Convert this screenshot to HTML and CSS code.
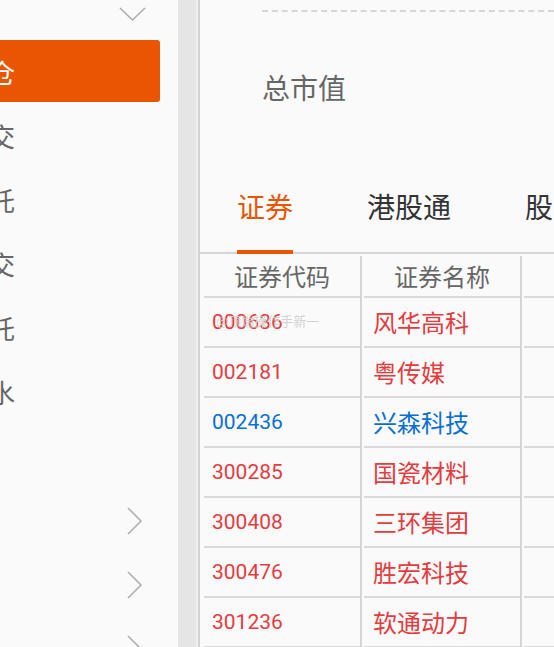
FILE: index.html
```html
<!DOCTYPE HTML>
<html>
<head>
 <title>持仓</title>
 <meta name="viewport" content="width=device-width, initial-scale=1">
 <link rel="stylesheet" href="styles.css">
</head>

<body>
<div class="page">

 <div class="sidebar">
  <div class="menu-head">
   <svg class="chev-down" width="28" height="15" viewBox="0 0 28 15"><polyline points="1,1 13.5,13 26,1" /></svg>
  </div>
  <div class="menu-item active"><div class="menu-label"><span>持仓</span></div></div>
  <div class="menu-item"><div class="menu-label"><span>成交</span></div></div>
  <div class="menu-item"><div class="menu-label"><span>委托</span></div></div>
  <div class="menu-item"><div class="menu-label"><span>历史成交</span></div></div>
  <div class="menu-item"><div class="menu-label"><span>历史委托</span></div></div>
  <div class="menu-item"><div class="menu-label"><span>资金流水</span></div></div>
  <div class="menu-item"></div>
  <div class="menu-item more"><svg class="chev-right" width="16" height="28" viewBox="0 0 16 28"><polyline points="1,1 14,14 1,27" /></svg></div>
  <div class="menu-item more"><svg class="chev-right" width="16" height="28" viewBox="0 0 16 28"><polyline points="1,1 14,14 1,27" /></svg></div>
  <div class="menu-item more"><svg class="chev-right" width="16" height="28" viewBox="0 0 16 28"><polyline points="1,1 14,14 1,27" /></svg></div>
 </div>

 <div class="divider"></div>

 <div class="main">
  <div class="summary">
   <p class="summary-title">总市值</p>
  </div>

  <div class="tabs">
   <div class="tab active">证券</div>
   <div class="tab">港股通</div>
   <div class="tab">股票期权</div>
  </div>

  <div class="grid">
   <div class="row head">
    <div class="cell"><div class="cell-in">证券代码</div></div>
    <div class="cell"><div class="cell-in">证券名称</div></div>
    <div class="cell"><div class="cell-in">持仓数量</div></div>
   </div>
   <div class="row up">
    <div class="cell"><div class="cell-in code">000636</div></div>
    <div class="cell"><div class="cell-in name">风华高科</div></div>
    <div class="cell"><div class="cell-in"></div></div>
   </div>
   <div class="row up">
    <div class="cell"><div class="cell-in code">002181</div></div>
    <div class="cell"><div class="cell-in name">粤传媒</div></div>
    <div class="cell"><div class="cell-in"></div></div>
   </div>
   <div class="row down">
    <div class="cell"><div class="cell-in code">002436</div></div>
    <div class="cell"><div class="cell-in name">兴森科技</div></div>
    <div class="cell"><div class="cell-in"></div></div>
   </div>
   <div class="row up">
    <div class="cell"><div class="cell-in code">300285</div></div>
    <div class="cell"><div class="cell-in name">国瓷材料</div></div>
    <div class="cell"><div class="cell-in"></div></div>
   </div>
   <div class="row up">
    <div class="cell"><div class="cell-in code">300408</div></div>
    <div class="cell"><div class="cell-in name">三环集团</div></div>
    <div class="cell"><div class="cell-in"></div></div>
   </div>
   <div class="row up">
    <div class="cell"><div class="cell-in code">300476</div></div>
    <div class="cell"><div class="cell-in name">胜宏科技</div></div>
    <div class="cell"><div class="cell-in"></div></div>
   </div>
   <div class="row up">
    <div class="cell"><div class="cell-in code">301236</div></div>
    <div class="cell"><div class="cell-in name">软通动力</div></div>
    <div class="cell"><div class="cell-in"></div></div>
   </div>

   <div class="watermark">@顶端操作手新一</div>
  </div>
 </div>

</div>
</body>
</html>
```

FILE: styles.css
```css
body{
 margin:0;
 width:554px;
 height:647px;
 overflow:hidden;
 background-color:#fafafa;
 font-family:"Noto Sans CJK SC","Noto Sans",sans-serif;
}

.page{
 display:flex;
 height:647px;
}

/* left menu */
.sidebar{
 width:178px;
 flex-shrink:0;
 background-color:#fafafa;
}
.menu-head{
 height:40px;
 box-sizing:border-box;
 padding:3px 0 0 119px;
}
.chev-down polyline,
.chev-right polyline{
 fill:none;
 stroke:#acacac;
 stroke-width:1.5;
}
.menu-item{
 width:160px;
 height:62px;
 margin-bottom:2px;
 display:flex;
 align-items:center;
 border-radius:0 3px 3px 0;
}
.menu-item.active{
 background-color:#ea5504;
}
.menu-item.more{
 justify-content:flex-end;
 padding-right:17px;
 box-sizing:border-box;
 padding-top:4px;
}
.menu-label{
 width:15px;
 display:flex;
 justify-content:flex-end;
 white-space:nowrap;
 font-size:26px;
 color:#666;
}
.menu-item.active .menu-label{
 color:#fff;
}

.divider{
 width:22px;
 flex-shrink:0;
 background:linear-gradient(to right,#e5e5e5 18px,#efefef 18px,#efefef 20px,#d2d2d2 20px);
}

/* right side */
.main{
 flex:1;
 min-width:0;
}
.summary{
 margin:10px 0 0 62px;
 border-top:2px dashed #d6d6d6;
 padding-top:55px;
}
.summary-title{
 margin:0;
 font-size:28px;
 line-height:40px;
 color:#666;
}

.tabs{
 margin-top:79px;
 padding-left:37px;
 display:flex;
 gap:74px;
 border-bottom:2px solid #d6d6d6;
}
.tab{
 flex-shrink:0;
 white-space:nowrap;
 font-size:28px;
 line-height:40px;
 color:#333;
 padding-bottom:24px;
 border-bottom:4px solid transparent;
 margin-bottom:-2px;
}
.tab.active{
 color:#ea5504;
 border-bottom-color:#ea5504;
}

.grid{
 position:relative;
 margin:2px 0 0 2px;
}
.row{
 display:flex;
}
.cell{
 width:160px;
 flex-shrink:0;
 box-sizing:border-box;
 padding-left:2px;
 border-right:2px solid #d4d4d4;
}
.cell-in{
 border-bottom:2px solid #dadada;
 height:48px;
 line-height:48px;
 white-space:nowrap;
}
.head .cell-in{
 height:40px;
 line-height:40px;
 text-align:center;
 font-size:24px;
 color:#666;
}
.code{
 padding-left:8px;
 font-family:Roboto,"Liberation Sans",sans-serif;
 font-size:21px;
}
.name{
 padding-left:9px;
 font-size:24px;
}
.up .cell-in{
 color:#e43c3e;
}
.down .cell-in{
 color:#0a6fd4;
}

.watermark{
 position:absolute;
 left:14px;
 top:56px;
 font-size:13px;
 line-height:18px;
 color:rgba(205,205,205,0.9);
 white-space:nowrap;
}
```
